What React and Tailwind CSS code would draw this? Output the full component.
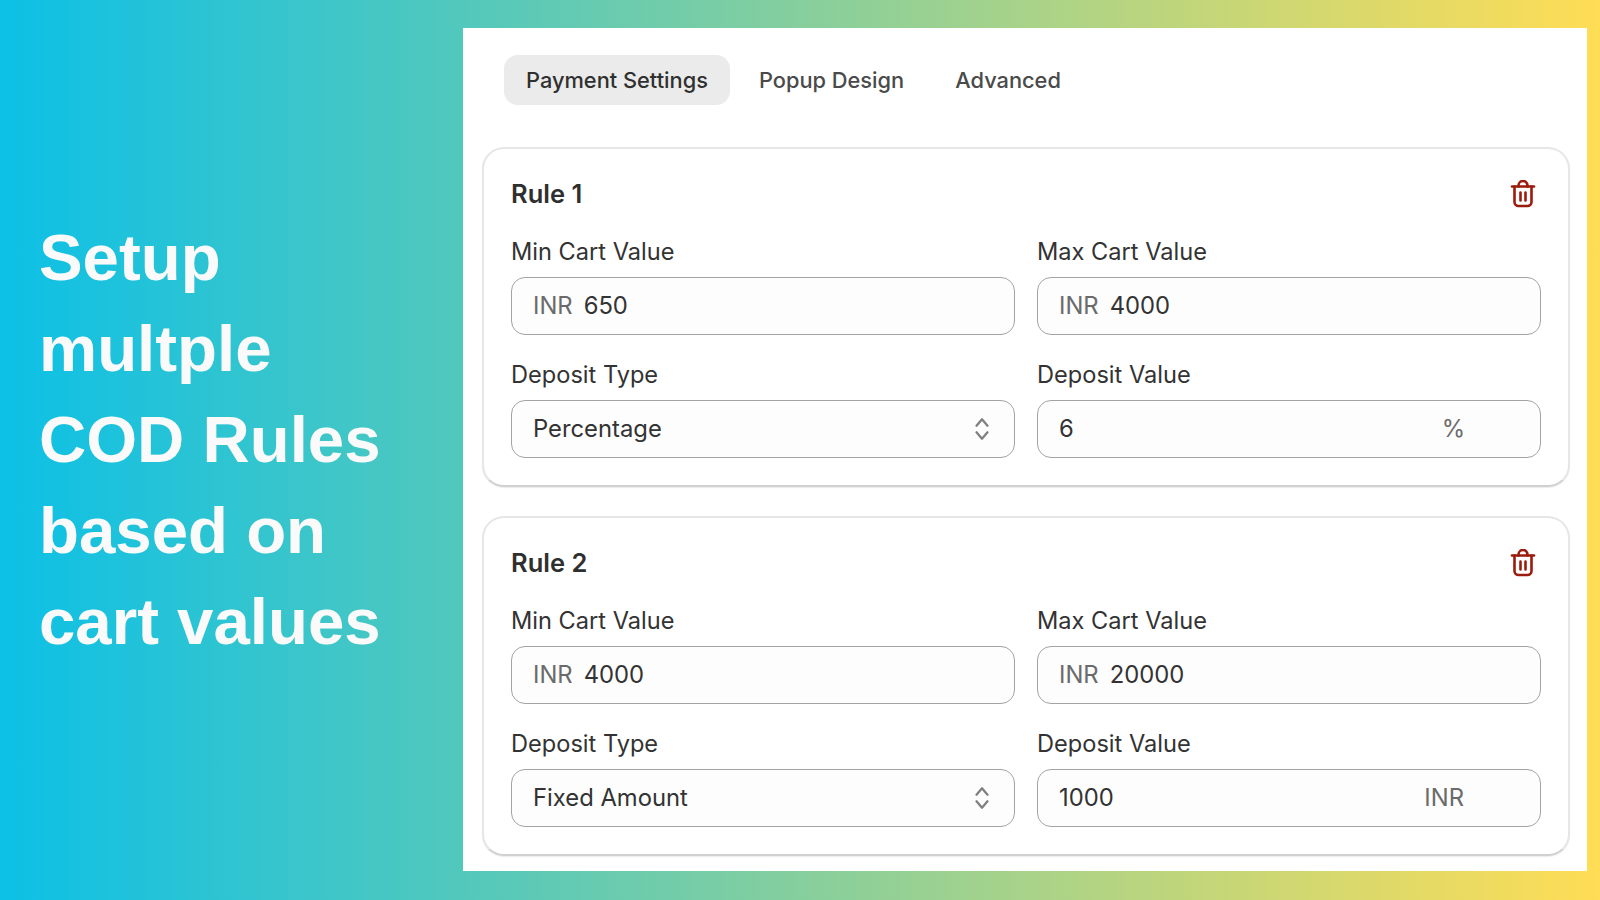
import React from "react";

const F = "font-['Inter',sans-serif]";

function Trash() {
  return (
    <svg width="26" height="28" viewBox="0 0 26 28" fill="none" stroke="#9b1c0c" strokeWidth="2.6" strokeLinecap="round" strokeLinejoin="round">
      <path d="M2 6.5h22" />
      <path d="M8.5 6.5V5.5a4.5 4.5 0 0 1 9 0v1" />
      <path d="M4.5 6.5v15.5a4 4 0 0 0 4 4h9a4 4 0 0 0 4-4V6.5" />
      <path d="M10.5 12.5v8M15.5 12.5v8" />
    </svg>
  );
}

function Chevrons() {
  return (
    <svg width="16" height="24" viewBox="0 0 16 24" fill="none" stroke="#808080" strokeWidth="2.3" strokeLinecap="round" strokeLinejoin="round">
      <path d="M2.5 8.7L8 2.3l5.5 6.4" />
      <path d="M2.5 15.3L8 21.7l5.5-6.4" />
    </svg>
  );
}

function Box({ children }) {
  return (
    <div className="h-[58px] flex items-center px-[21px] rounded-[14px] bg-[#fdfdfd] border border-[#a3a3a6] text-[23.8px] text-[#333333]">
      {children}
    </div>
  );
}

function Field({ label, children }) {
  return (
    <div className="flex flex-col">
      <div className="h-[36px] mb-[7px] flex items-center text-[23.6px] text-[#333333]">{label}</div>
      {children}
    </div>
  );
}

function Money({ value }) {
  return (
    <Box>
      <span className="text-[#6b6b6b] mr-[11px]">INR</span>
      <span>{value}</span>
    </Box>
  );
}

function Rule({ title, min, max, type, value, suffix, suffixClass }) {
  return (
    <div className="h-[340px] rounded-[22px] bg-white border-2 border-[#e6e6e6] border-b-[#d0d0d0] px-[27px] pt-[27px] shadow-[0_1px_1px_rgba(0,0,0,0.08)]">
      <div className="flex items-center justify-between h-[36px] mb-[22px]">
        <div className="text-[25.5px] font-semibold text-[#2f2f2f]">{title}</div>
        <div className="mr-[5px] flex"><Trash /></div>
      </div>
      <div className="grid grid-cols-2 gap-x-[22px] gap-y-[22px]">
        <Field label="Min Cart Value"><Money value={min} /></Field>
        <Field label="Max Cart Value"><Money value={max} /></Field>
        <Field label="Deposit Type">
          <Box>
            <span className="flex-1">{type}</span>
            <span className="flex mr-[3px]"><Chevrons /></span>
          </Box>
        </Field>
        <Field label="Deposit Value">
          <Box>
            <span className="flex-1">{value}</span>
            <span className={`text-[#6b6b6b] ${suffixClass}`}>{suffix}</span>
          </Box>
        </Field>
      </div>
    </div>
  );
}

export default function App() {
  return (
    <div className={`${F} w-full h-[900px] flex overflow-hidden bg-linear-to-r/srgb from-[#0cc0e6] to-[#ffdd55]`}>
      <div className="w-[463px] shrink-0 flex items-center pl-[39px] pb-[22px]">
        <div className="text-[#fafafa] font-bold text-[65.4px] leading-[91px] font-['Liberation_Sans',sans-serif]">
          <div>Setup</div>
          <div>multple</div>
          <div>COD Rules</div>
          <div>based on</div>
          <div>cart values</div>
        </div>
      </div>
      <div className="mt-[28px] mb-[29px] w-[1124px] bg-white pl-[19px] pr-[17px] pt-[27px]">
        <div className="flex items-center gap-[7px] pl-[22px] h-[50px] mb-[42px] text-[21.8px] font-medium text-[#4a4a4a]">
          <div className="h-[50px] flex items-center px-[22px] rounded-[14px] bg-[#ebebeb] text-[#303030]">Payment Settings</div>
          <div className="h-[50px] flex items-center px-[22px]">Popup Design</div>
          <div className="h-[50px] flex items-center px-[22px]">Advanced</div>
        </div>
        <div className="flex flex-col gap-[29px]">
          <Rule title="Rule 1" min="650" max="4000" type="Percentage" value="6" suffix="%" suffixClass="mr-[54px]" />
          <Rule title="Rule 2" min="4000" max="20000" type="Fixed Amount" value="1000" suffix="INR" suffixClass="mr-[55px]" />
        </div>
      </div>
    </div>
  );
}
